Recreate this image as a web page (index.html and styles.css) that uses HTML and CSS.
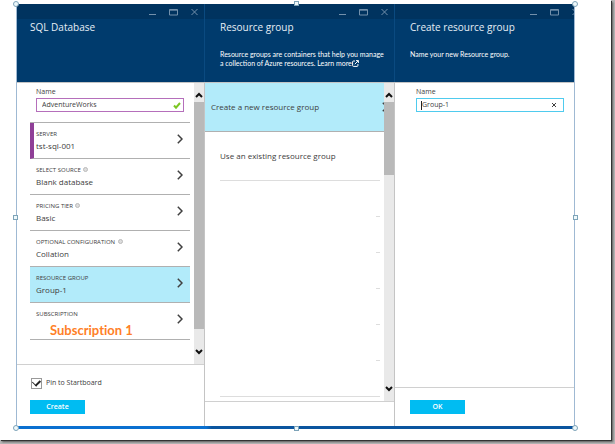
FILE: index.html
```html
<!DOCTYPE html>
<html lang="en">
<head>
    <meta charset="UTF-8">
    <meta name="viewport" content="width=device-width, initial-scale=1.0">
    <title>SQL Database</title>
    <link rel="stylesheet" href="styles.css">
</head>
<body>
    <svg class="symbols" width="0" height="0" aria-hidden="true">
        <symbol id="min" viewBox="0 0 9 8"><path d="M1 6.5h7" /></symbol>
        <symbol id="max" viewBox="0 0 9 8"><path d="M.5 1.5h8v5.500h-8zM.5 2.200h8" /></symbol>
        <symbol id="close" viewBox="0 0 9 8"><path d="M1.500 1l6 6M7.500 1l-6 6" /></symbol>
        <symbol id="chevron" viewBox="0 0 6 10"><path d="M.8 .8L5 5L.8 9.200" /></symbol>
        <symbol id="up" viewBox="0 0 8 6"><path d="M1 5l3-3l3 3" /></symbol>
        <symbol id="down" viewBox="0 0 8 6"><path d="M1 1l3 3l3-3" /></symbol>
    </svg>

    <div class="sheet">
        <div class="frame">
            <div class="blades">

                <!-- SQL Database -->
                <section class="blade">
                    <header class="blade-header">
                        <div class="window-buttons">
                            <button aria-label="Minimize"><svg><use href="#min" /></svg></button>
                            <button aria-label="Maximize"><svg><use href="#max" /></svg></button>
                            <button aria-label="Close"><svg><use href="#close" /></svg></button>
                        </div>
                        <h2>SQL Database</h2>
                    </header>
                    <div class="blade-body">
                        <div class="content">
                            <div class="form-group">
                                <label for="dbName">Name</label>
                                <div class="field valid">
                                    <input type="text" id="dbName" value="AdventureWorks">
                                    <svg class="check" viewBox="0 0 8 7"><path d="M1 3.500l2 2.200L7 1" /></svg>
                                </div>
                            </div>
                            <ul class="settings">
                                <li><button class="setting required">
                                    <span class="caption">Server</span>
                                    <span class="value">tst-sql-001</span>
                                    <svg class="chevron"><use href="#chevron" /></svg>
                                </button></li>
                                <li><button class="setting">
                                    <span class="caption">Select source <i class="info"></i></span>
                                    <span class="value">Blank database</span>
                                    <svg class="chevron"><use href="#chevron" /></svg>
                                </button></li>
                                <li><button class="setting">
                                    <span class="caption">Pricing tier <i class="info"></i></span>
                                    <span class="value">Basic</span>
                                    <svg class="chevron"><use href="#chevron" /></svg>
                                </button></li>
                                <li><button class="setting">
                                    <span class="caption">Optional configuration <i class="info"></i></span>
                                    <span class="value">Collation</span>
                                    <svg class="chevron"><use href="#chevron" /></svg>
                                </button></li>
                                <li><button class="setting selected">
                                    <span class="caption">Resource group</span>
                                    <span class="value">Group-1</span>
                                    <svg class="chevron"><use href="#chevron" /></svg>
                                </button></li>
                                <li><button class="setting roomy">
                                    <span class="caption">Subscription</span>
                                    <span class="value note">Subscription 1</span>
                                    <svg class="chevron"><use href="#chevron" /></svg>
                                </button></li>
                            </ul>
                        </div>
                        <div class="scrollbar">
                            <svg><use href="#up" /></svg>
                            <div class="track"><div class="thumb long"></div></div>
                            <svg><use href="#down" /></svg>
                        </div>
                    </div>
                    <footer class="blade-footer tall">
                        <div class="pin">
                            <input type="checkbox" id="pin" checked>
                            <label for="pin">Pin to Startboard</label>
                        </div>
                        <button class="primary">Create</button>
                    </footer>
                </section>

                <!-- Resource group -->
                <section class="blade">
                    <header class="blade-header">
                        <div class="window-buttons">
                            <button aria-label="Minimize"><svg><use href="#min" /></svg></button>
                            <button aria-label="Maximize"><svg><use href="#max" /></svg></button>
                            <button aria-label="Close"><svg><use href="#close" /></svg></button>
                        </div>
                        <h2>Resource group</h2>
                        <p>Resource groups are containers that help you manage<br>a collection of Azure resources. <a href="#">Learn more<svg class="external" viewBox="0 0 7 7"><path d="M3 1H1.500Q.6 1 .6 2v3.500q0 .9.9.9H5q.9 0 .9-.9V4M2.800 4.200L6.300.7M4 .6h2.400V3" /></svg></a></p>
                    </header>
                    <div class="blade-body">
                        <ul class="content choices">
                            <li><button class="choice selected">Create a new resource group <svg class="chevron"><use href="#chevron" /></svg></button></li>
                            <li><button class="choice">Use an existing resource group</button></li>
                            <li class="empty"></li>
                            <li class="empty"></li>
                            <li class="empty"></li>
                            <li class="empty"></li>
                            <li class="empty"></li>
                            <li class="empty last"></li>
                        </ul>
                        <div class="scrollbar">
                            <svg><use href="#up" /></svg>
                            <div class="track"><div class="thumb short"></div></div>
                            <svg><use href="#down" /></svg>
                        </div>
                    </div>
                    <footer class="blade-footer"></footer>
                </section>

                <!-- Create resource group -->
                <section class="blade">
                    <header class="blade-header clipped">
                        <div class="window-buttons">
                            <button aria-label="Minimize"><svg><use href="#min" /></svg></button>
                            <button aria-label="Maximize"><svg><use href="#max" /></svg></button>
                            <button aria-label="Close"><svg><use href="#close" /></svg></button>
                        </div>
                        <h2>Create resource group</h2>
                        <p>Name your new Resource group.</p>
                    </header>
                    <div class="blade-body">
                        <div class="content">
                            <div class="form-group">
                                <label for="groupName">Name</label>
                                <div class="field active">
                                    <i class="caret"></i>
                                    <input type="text" id="groupName" value="Group-1">
                                    <button class="clear" aria-label="Clear"><svg viewBox="0 0 6 6"><path d="M1 1l4 4M5 1L1 5" /></svg></button>
                                </div>
                            </div>
                        </div>
                    </div>
                    <footer class="blade-footer">
                        <button class="primary">OK</button>
                    </footer>
                </section>
            </div>

            <!-- Selection handles -->
            <i class="handle top left"></i>
            <i class="handle square top center"></i>
            <i class="handle top right"></i>
            <i class="handle square middle left"></i>
            <i class="handle square middle right"></i>
            <i class="handle bottom left"></i>
            <i class="handle square bottom center"></i>
            <i class="handle bottom right"></i>
        </div>
    </div>
</body>
</html>
```

FILE: styles.css
```css
* {
    box-sizing: border-box;
}

body {
    display: flex;
    min-height: 100vh;
    margin: 0;
    padding: 0 4px 4px 0;
    background-color: #b8b8b8;
    font-family: "Open Sans", "Noto Sans", sans-serif;
    font-size: 8px;
    line-height: 12px;
    color: #404040;
}

button, input {
    font: inherit;
    color: inherit;
    margin: 0;
    padding: 0;
    border: none;
    background: none;
}

ul, h2, p {
    margin: 0;
    padding: 0;
    list-style: none;
}

svg {
    fill: none;
    stroke: currentColor;
}

.symbols {
    position: absolute;
}

.sheet {
    flex: 1;
    display: flex;
    padding: 4px 36px 11px 16px;
    background-color: white;
    box-shadow: 1px 1px 0 #333, 2px 2px 2px #555;
}

.frame {
    position: relative;
    flex: 1;
    display: flex;
    flex-direction: column;
}

.frame::after {
    content: "";
    height: 3px;
    background: linear-gradient(90deg, #0a70d0 34%, #0b559f 35%);
}

.blades {
    flex: 1;
    display: grid;
    grid-template-columns: 188fr 190fr 179fr;
    border-left: 1px solid #9fb9d3;
    border-right: 1px solid #9fb9d3;
}

.blade {
    display: flex;
    flex-direction: column;
    min-width: 0;
    border-right: 1px solid #c4c4c4;
}

.blade:last-child {
    border-right: none;
}

/* Header */
.blade-header {
    height: 78px;
    margin-right: -1px;
    padding-left: 13px;
    overflow: hidden;
    background: linear-gradient(#00335f 15px, #003b6d 15px);
    border-right: 1px solid #0a4a80;
    color: #e6eef5;
}

.blade:not(:first-child) .blade-header {
    padding-left: 15px;
}

.blade:last-child .blade-header {
    margin-right: 0;
    border-right: none;
}

.window-buttons {
    display: flex;
    justify-content: flex-end;
    gap: 12px;
    height: 15px;
    padding-right: 5px;
    color: #7390ab;
}

.clipped .window-buttons {
    margin-right: -11px;
}

.window-buttons svg {
    display: block;
    width: 9px;
    height: 8px;
}

.blade-header h2 {
    font-size: 10px;
    font-weight: normal;
    line-height: 16px;
}

.blade-header p {
    margin-top: 15px;
    font-family: Lato, "Open Sans", sans-serif;
    font-size: 7px;
    line-height: 9px;
    color: white;
}

.blade-header a {
    color: inherit;
    text-decoration: none;
}

.external {
    width: 7px;
    height: 7px;
    vertical-align: -1px;
}

/* Body */
.blade-body {
    flex: 1;
    display: flex;
    border-top: 1px solid #c4c4c4;
}

.content {
    flex: 1;
    min-width: 0;
}

.form-group {
    padding: 4px 10px 10px 19px;
    font-size: 7px;
}

.blade:last-child .form-group {
    padding-left: 21px;
}

.form-group label {
    display: block;
    line-height: 10px;
}

.field {
    display: flex;
    align-items: center;
    height: 14px;
    margin-top: 1px;
    padding: 0 2px 0 5px;
    border: 1px solid #b56fbb;
}

.field input {
    flex: 1;
    min-width: 0;
    height: 12px;
    outline: none;
}

.check {
    width: 8px;
    height: 7px;
    stroke: #7cc623;
    stroke-width: 2;
}

.active {
    padding: 0 6px 0 4px;
    border-color: #4fcbee;
}

.clear svg {
    display: block;
    width: 6px;
    height: 6px;
}

.caret {
    width: 1px;
    height: 9px;
    background-color: #222;
}

.settings {
    margin: 0 4px 0 13px;
    border-top: 1px solid #b0b0b0;
}

.setting {
    display: grid;
    grid-template-columns: 1fr 6px;
    grid-template-rows: 11px 12px;
    align-content: start;
    width: 100%;
    height: 36px;
    padding: 6px 7px 0 6px;
    border-bottom: 1px solid #b0b0b0;
    text-align: left;
}

.roomy {
    height: 37px;
    grid-template-rows: 11px 20px;
}

.required {
    padding-left: 2px;
    border-left: 4px solid #8f3f97;
}

.selected {
    background-color: #b2ebfa;
}

.caption {
    font-size: 6px;
    line-height: 11px;
    text-transform: uppercase;
    white-space: nowrap;
}

.value {
    grid-row: 2;
}

.note {
    padding-left: 14px;
    font-family: Lato, "Open Sans", sans-serif;
    font-size: 13px;
    font-weight: bold;
    font-variant-ligatures: none;
    line-height: 20px;
    color: #ff7f27;
}

.info {
    display: inline-block;
    width: 5px;
    height: 5px;
    margin-left: 1px;
    border: 1px solid #bbb;
    border-radius: 50%;
    background-color: #ddd;
}

.chevron {
    width: 6px;
    height: 10px;
    stroke-width: 1.5;
}

.setting .chevron {
    grid-area: 1 / 2 / 3 / 3;
    margin-top: 5px;
}

.choice {
    display: flex;
    align-items: center;
    justify-content: space-between;
    width: 100%;
    height: 49px;
    padding-left: 6px;
    overflow: hidden;
    white-space: nowrap;
}

.choice.selected {
    border-bottom: 1px solid #b0b0b0;
}

.choice .chevron {
    flex: none;
    margin-right: -4px;
}

.choice:not(.selected) {
    width: auto;
    min-width: calc(100% - 19px);
    margin: 0 4px 0 15px;
    padding-left: 0;
    border-bottom: 1px solid #ddd;
}

.empty {
    height: 36px;
    margin: 0 4px 0 15px;
    background: linear-gradient(#ddd, #ddd) right bottom / 4px 1px no-repeat;
}

.empty.last {
    background-size: 100% 1px;
}

/* Scrollbar */
.scrollbar {
    display: flex;
    flex-direction: column;
    width: 10px;
    background-color: #e9e9e9;
}

.scrollbar svg {
    width: 8px;
    height: 6px;
    margin: 9px 1px 4px;
    stroke: #111;
    stroke-width: 2;
}

.scrollbar svg:last-child {
    margin: 5px 1px 9px;
}

.track {
    flex: 1;
}

.thumb {
    background-color: #b9b9b9;
}

.long {
    height: 94%;
}

.short {
    height: 26%;
}

/* Footer */
.blade-footer {
    min-height: 25px;
    border-top: 1px solid #d0d0d0;
}

.blade:last-child .blade-footer {
    padding: 12px 0 12px 15px;
}

.tall {
    padding: 12px 0 12px 13px;
}

.pin {
    display: flex;
    align-items: center;
    gap: 4px;
    margin-bottom: 11px;
    padding-left: 1px;
    font-size: 7px;
}

.pin input {
    appearance: none;
    display: flex;
    align-items: center;
    justify-content: center;
    width: 11px;
    height: 11px;
    border: 1px solid #999;
}

.pin input:checked::before {
    content: "";
    width: 6px;
    height: 4px;
    margin-bottom: 2px;
    border-left: 1px solid #222;
    border-bottom: 2px solid #222;
    transform: rotate(-45deg);
}

.primary {
    display: block;
    width: 55px;
    height: 14px;
    background-color: #00bcf2;
    color: white;
    font-size: 7px;
    font-weight: 600;
    line-height: 14px;
}

/* Selection handles */
.handle {
    position: absolute;
    width: 6px;
    height: 6px;
    border: 1px solid #7da3b8;
    border-radius: 50%;
    background-color: #eef8fb;
}

.square {
    width: 5px;
    height: 5px;
    border-radius: 0;
}

.top { top: -3px; }
.middle { top: calc(50% - 2px); }
.bottom { bottom: -2px; }
.left { left: -3px; }
.center { left: calc(50% - 2px); }
.right { right: -3px; }
```
